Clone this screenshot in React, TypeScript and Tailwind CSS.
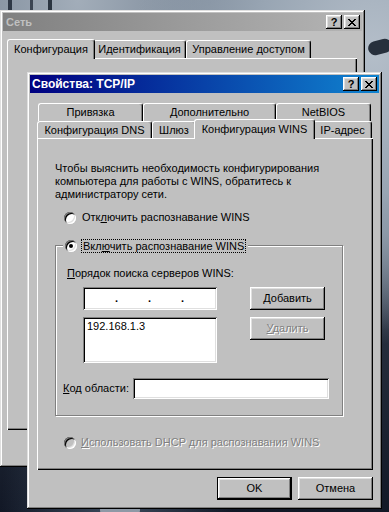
import type { ReactNode } from 'react';

// win98 bevels
const raised =
  'shadow-[inset_-1px_-1px_#000,inset_1px_1px_#fff,inset_-2px_-2px_#808080,inset_2px_2px_#dfdfdf]';
const frame =
  'shadow-[inset_-1px_-1px_#000,inset_1px_1px_#dfdfdf,inset_-2px_-2px_#808080,inset_2px_2px_#fff]';
const sunken =
  'shadow-[inset_1px_1px_#808080,inset_-1px_-1px_#fff,inset_2px_2px_#000,inset_-2px_-2px_#dfdfdf]';
const panel = 'shadow-[inset_1px_1px_#fff,inset_-1px_-1px_#000,inset_-2px_-2px_#808080]';
const tabEdge = 'border-t border-l border-white border-r border-r-black shadow-[inset_-1px_0_#808080] rounded-t-[3px]';
const disabled = 'text-[#808080] [text-shadow:1px_1px_0_#fff]';

const CloseGlyph = () => (
  <svg width="8" height="7" viewBox="0 0 8 7" shapeRendering="crispEdges">
    <rect x="0" y="0" width="2" height="1" />
    <rect x="6" y="0" width="2" height="1" />
    <rect x="1" y="1" width="2" height="1" />
    <rect x="5" y="1" width="2" height="1" />
    <rect x="2" y="2" width="4" height="1" />
    <rect x="3" y="3" width="2" height="1" />
    <rect x="2" y="4" width="4" height="1" />
    <rect x="1" y="5" width="2" height="1" />
    <rect x="5" y="5" width="2" height="1" />
    <rect x="0" y="6" width="2" height="1" />
    <rect x="6" y="6" width="2" height="1" />
  </svg>
);

function TitleButtons() {
  return (
    <div className="flex gap-[2px]">
      <div className={`w-[16px] h-[14px] bg-[#c0c0c0] ${raised} flex items-center justify-center text-[11px] font-bold leading-none text-black`}>
        ?
      </div>
      <div className={`w-[16px] h-[14px] bg-[#c0c0c0] ${raised} flex items-center justify-center`}>
        <CloseGlyph />
      </div>
    </div>
  );
}

function Tab({ w, label, selected, h = 'h-[18px]' }: { w: string; label: string; selected?: boolean; h?: string }) {
  return (
    <div
      className={`${w} ${selected ? 'h-[20px] -mx-[2px] mb-[-1px] relative z-10' : h} ${tabEdge} bg-[#c0c0c0] flex items-center justify-center shrink-0`}
    >
      <span className="leading-none">{label}</span>
    </div>
  );
}

function Radio({ checked, dim }: { checked?: boolean; dim?: boolean }) {
  return (
    <div
      className={`w-[12px] h-[12px] rounded-full ${dim ? 'bg-[#c0c0c0]' : 'bg-white'} shadow-[inset_1px_1px_#808080,inset_-1px_-1px_#fff,inset_2px_2px_#000,inset_-2px_-2px_#dfdfdf] flex items-center justify-center shrink-0`}
    >
      {checked && <div className="w-[4px] h-[4px] rounded-full bg-black" />}
    </div>
  );
}

function Button({ children, w = 'w-[75px]', def, className = '' }: { children: ReactNode; w?: string; def?: boolean; className?: string }) {
  return (
    <div className={`${w} h-[23px] bg-[#c0c0c0] ${def ? 'border border-black' : ''} ${className}`}>
      <div className={`w-full h-full ${raised} flex items-center justify-center`}>{children}</div>
    </div>
  );
}

export default function App() {
  return (
    <div className="relative w-[389px] h-[512px] overflow-hidden bg-[#1e2634] font-['Liberation_Sans',Arial,sans-serif] text-[11px] text-black">
      {/* desktop wallpaper */}
      <div className="absolute inset-0 bg-[radial-gradient(ellipse_at_96%_10%,#b4bec9_0%,#98a5b3_22%,transparent_45%),radial-gradient(ellipse_at_20%_0%,#a2adb9_0%,#7a8797_30%,transparent_55%),radial-gradient(ellipse_at_98%_45%,#6c7888_0%,transparent_25%),radial-gradient(ellipse_at_30%_100%,#3c4a5c_0%,transparent_30%),linear-gradient(180deg,#6a7686_0%,#343e4d_40%,#121826_100%)]" />
      <div className="absolute left-[8px] top-0 w-[4px] h-[10px] bg-[#2e3846]" />
      <div className="absolute left-[30px] top-0 w-[3px] h-[10px] bg-[#3a4452]" />
      <div className="absolute left-[48px] top-0 w-[4px] h-[10px] bg-[#2b3541]" />
      <div className="absolute left-[368px] top-[40px] w-[24px] h-[14px] rounded-full bg-[#27303c] rotate-[-15deg]" />
      <div className="absolute left-[375px] top-[150px] w-[4px] h-[180px] bg-[#8592a0] opacity-60" />
      <div className="absolute left-[100px] top-[506px] w-[40px] h-[8px] rounded-full bg-[#8e99a6]" />

      {/* outer window: Сеть */}
      <div className={`absolute left-0 top-[10px] w-[365px] h-[457px] bg-[#c0c0c0] ${frame} p-[3px]`}>
        <div className="h-[18px] bg-[linear-gradient(90deg,#808080,#b5b5b5)] flex items-center justify-between pl-[3px] pr-[2px]">
          <span className="font-bold text-[#c0c0c0]">Сеть</span>
          <TitleButtons />
        </div>
        <div className="ml-[4px] mt-[9px] flex h-[18px] items-end pl-[2px]">
          <Tab w="w-[88px]" label="Конфигурация" selected />
          <Tab w="w-[93px]" label="Идентификация" />
          <Tab w="w-[125px]" label="Управление доступом" />
        </div>
        <div className={`ml-[4px] w-[350px] h-[372px] ${panel}`} />
      </div>

      {/* inner window: Свойства TCP/IP */}
      <div className={`absolute left-[27px] top-[72px] w-[355px] h-[437px] bg-[#c0c0c0] ${frame} p-[3px]`}>
        <div className="h-[18px] bg-[linear-gradient(90deg,#000080,#1084d0)] flex items-center justify-between pl-[2px] pr-[2px]">
          <span className="font-bold text-white text-[12px]">Свойства: TCP/IP</span>
          <TitleButtons />
        </div>

        <div className="ml-[7px] mt-[10px] w-[336px]">
          <div className="flex h-[18px] pl-[1px]">
            <Tab w="w-[105px]" label="Привязка" />
            <Tab w="w-[133px]" label="Дополнительно" />
            <Tab w="w-[95px]" label="NetBIOS" />
          </div>
          <div className="flex h-[17px] items-end">
            <Tab w="w-[115px]" h="h-[17px]" label="Конфигурация DNS" />
            <Tab w="w-[44px]" h="h-[17px]" label="Шлюз" />
            <Tab w="w-[121px]" label="Конфигурация WINS" selected />
            <Tab w="w-[59px]" h="h-[17px]" label="IP-адрес" />
          </div>

          <div className={`h-[332px] ${panel} pt-[24px] pl-[18px]`}>
            <p className="leading-[13px] w-[300px]">
              Чтобы выяснить необходимость конфигурирования
              <br />
              компьютера для работы с WINS, обратитесь к
              <br />
              администратору сети.
            </p>

            <div className="mt-[10px] ml-[9px] flex items-center gap-[6px] h-[13px]">
              <Radio />
              <span>
                Отк<u>л</u>ючить распознавание WINS
              </span>
            </div>

            <div className="relative mt-[21px] w-[288px] h-[171px] border border-[#808080] shadow-[1px_1px_0_#fff,inset_1px_1px_0_#fff]">
              <div className="absolute -top-[8px] left-[7px] flex items-center gap-[4px] bg-[#c0c0c0] pl-[2px] pr-[2px] h-[15px]">
                <Radio checked />
                <span className="border border-dotted border-black px-[1px] leading-[12px]">
                  Вкл<u>ю</u>чить распознавание WINS
                </span>
              </div>

              <div className="pt-[21px] pl-[11px] leading-[13px]">
                <u>П</u>орядок поиска серверов WINS:
              </div>

              <div className="flex mt-[7px] ml-[27px]">
                <div className={`w-[134px] h-[23px] bg-white ${sunken} flex items-center pl-[2px]`}>
                  <span className="w-[30px]" />
                  <span className="w-[3px] font-bold">.</span>
                  <span className="w-[30px]" />
                  <span className="w-[3px] font-bold">.</span>
                  <span className="w-[30px]" />
                  <span className="w-[3px] font-bold">.</span>
                </div>
                <Button className="ml-[33px]">
                  <span>
                    <u>Д</u>обавить
                  </span>
                </Button>
              </div>

              <div className="flex mt-[7px] ml-[27px]">
                <div className={`w-[134px] h-[46px] bg-white ${sunken} pl-[4px] pt-[3px] leading-[13px]`}>192.168.1.3</div>
                <Button className="ml-[33px]">
                  <span className={disabled}>
                    <u>У</u>далить
                  </span>
                </Button>
              </div>

              <div className="flex items-center mt-[15px] ml-[7px]">
                <span className="w-[70px]">
                  <u>К</u>од области:
                </span>
                <div className={`w-[196px] h-[21px] bg-white ${sunken}`} />
              </div>
            </div>

            <div className="mt-[20px] ml-[9px] flex items-center gap-[5px] h-[13px]">
              <Radio dim />
              <span className={disabled}>
                <u>И</u>спользовать DHCP для распознавания WINS
              </span>
            </div>
          </div>
        </div>

        <div className="flex justify-end gap-[6px] mt-[7px] pr-[6px]">
          <Button def>
            <span>OK</span>
          </Button>
          <Button>
            <span>Отмена</span>
          </Button>
        </div>
      </div>
    </div>
  );
}
